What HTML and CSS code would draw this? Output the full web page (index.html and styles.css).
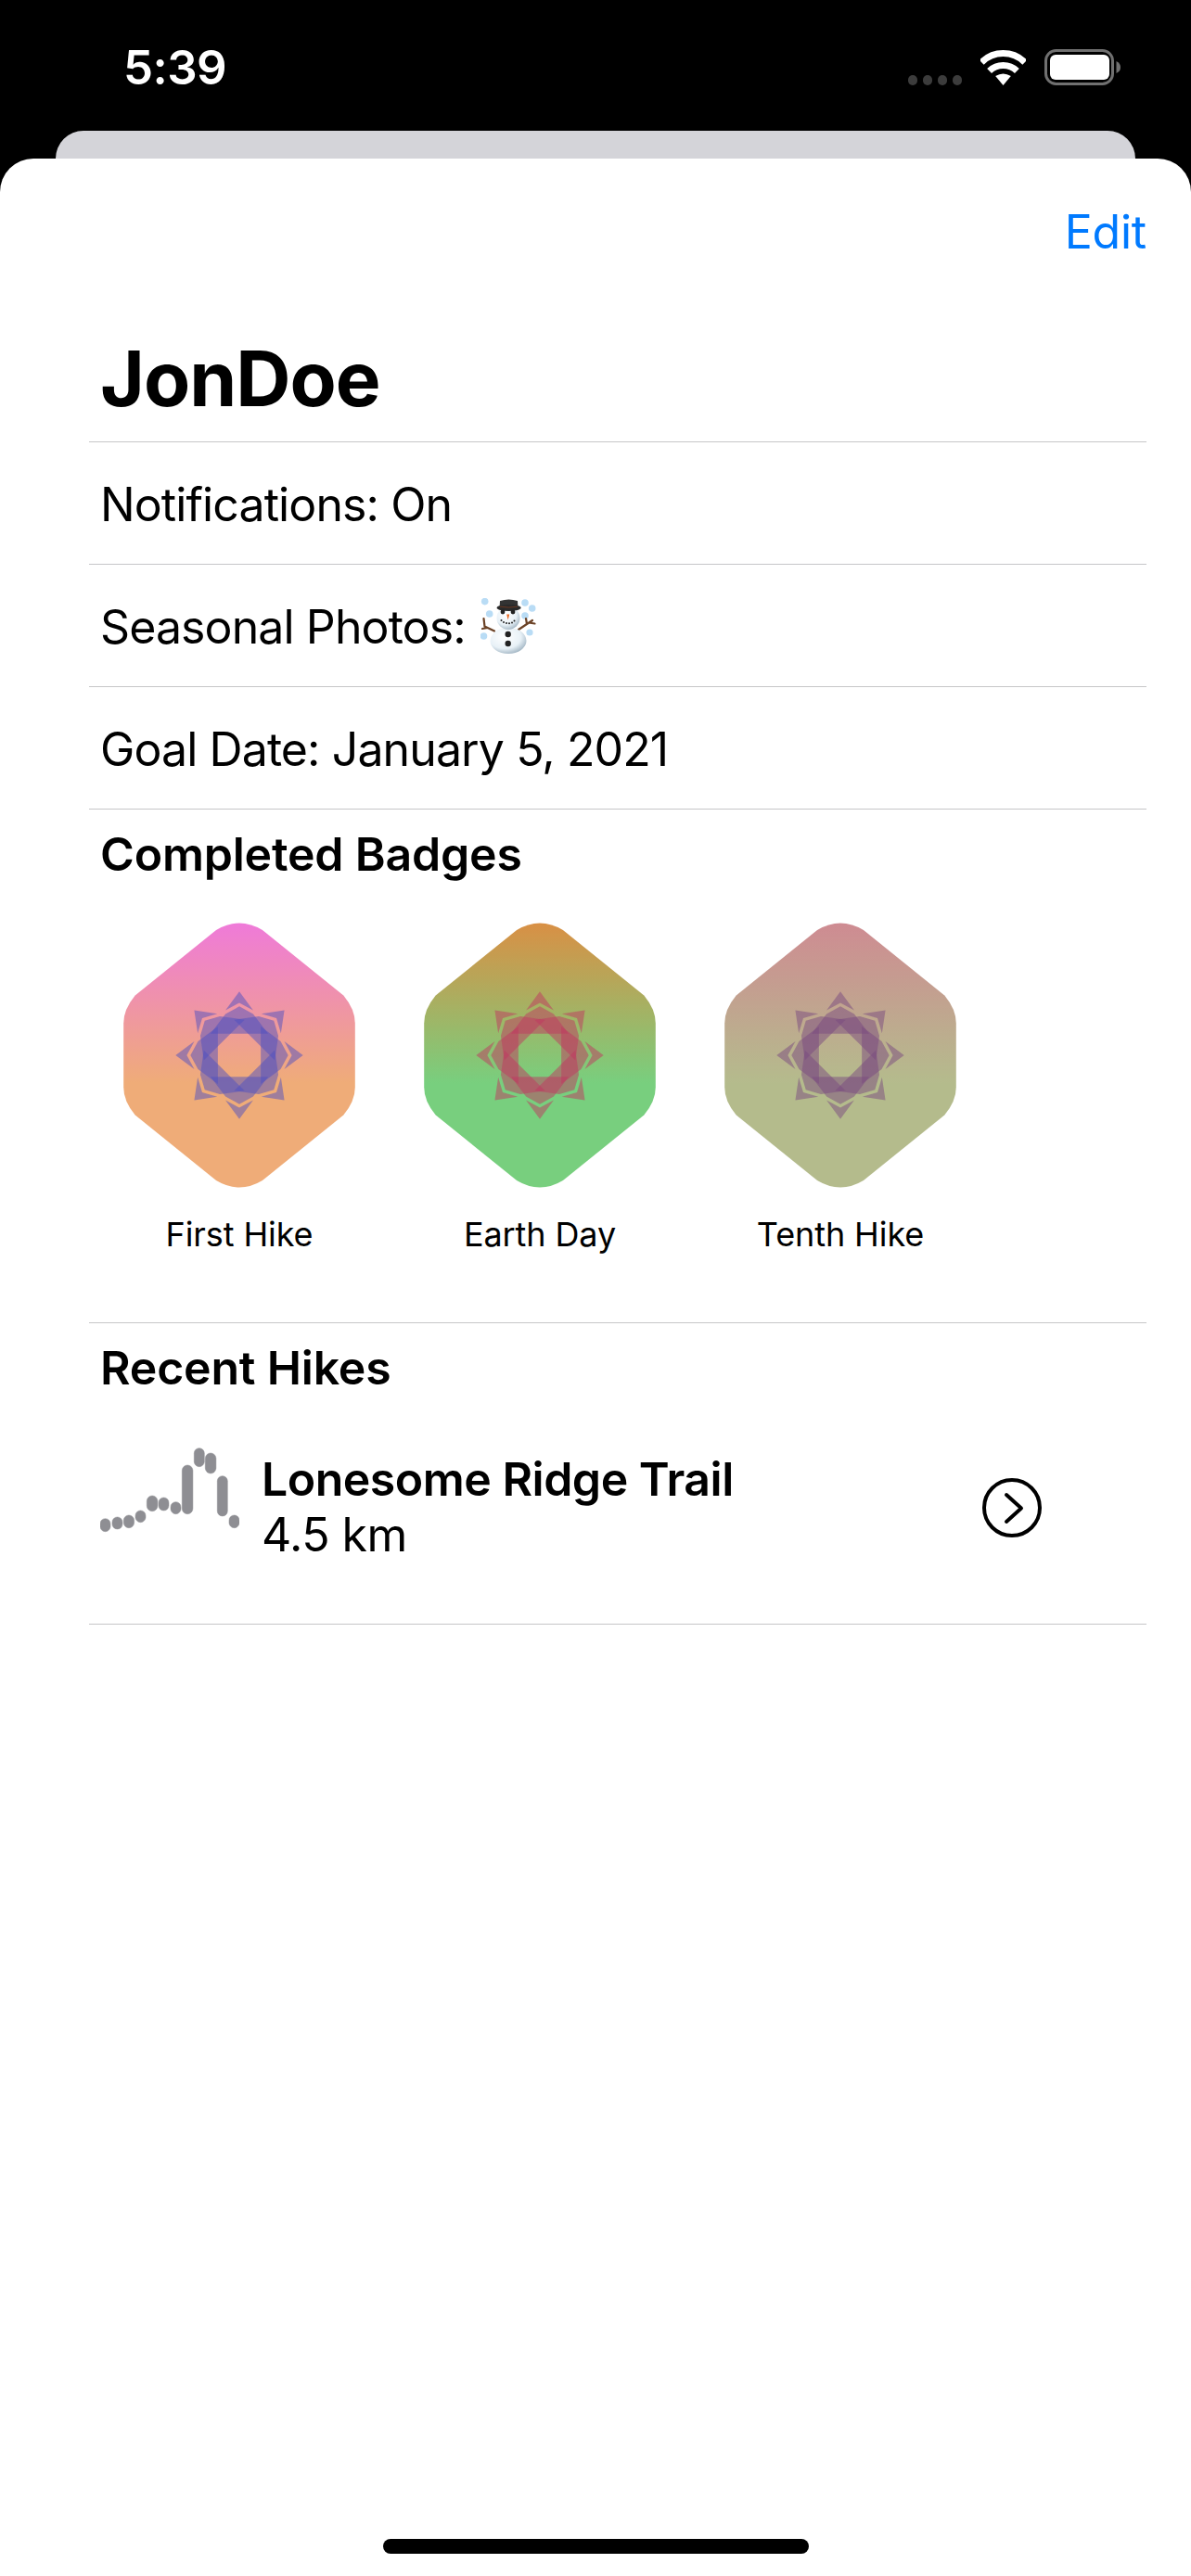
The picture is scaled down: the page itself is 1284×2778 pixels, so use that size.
FILE: index.html
```html
<!DOCTYPE html>
<html lang="en">
<head>
<meta charset="utf-8">
<title>Profile</title>
<link rel="stylesheet" href="styles.css">
</head>
<body>
<svg class="defs" width="0" height="0" aria-hidden="true">
  <defs>
    <linearGradient id="badgeGrad" gradientUnits="userSpaceOnUse" x1="150" y1="0" x2="150" y2="180">
      <stop offset="0" stop-color="#ef78dd"/>
      <stop offset="1" stop-color="#efac78"/>
    </linearGradient>
    <path id="sym" fill="#4f4fbf" fill-opacity="0.5" d="M0 -68.7L-14.92 -48.5L0 -56.62L14.92 -48.5ZM0 -52.66L-14.92 -44.54L-31.02 -23.16L31.02 -23.16L14.92 -44.54Z"/>
    <g id="badge">
      <path fill="url(#badgeGrad)" d="M262.32 85.5L174.96 15Q150 0 125.04 15L37.68 85.5Q25.2 100.5 25.2 115.5L25.2 184.5Q25.2 199.5 37.68 214.5L125.04 285Q150 300 174.96 285L262.32 214.5Q274.8 199.5 274.8 184.5L274.8 115.5Q274.8 100.5 262.32 85.5Z"/>
      <g transform="translate(150 150)">
        <use href="#sym"/>
        <use href="#sym" transform="rotate(45)"/>
        <use href="#sym" transform="rotate(90)"/>
        <use href="#sym" transform="rotate(135)"/>
        <use href="#sym" transform="rotate(180)"/>
        <use href="#sym" transform="rotate(225)"/>
        <use href="#sym" transform="rotate(270)"/>
        <use href="#sym" transform="rotate(315)"/>
      </g>
    </g>
  </defs>
</svg>
<div class="screen">
  <header class="status">
    <span class="time">5:39</span>
    <div class="status-icons">
      <div class="signal"><i></i><i></i><i></i><i></i></div>
      <svg class="wifi" width="49" height="38" viewBox="0 0 49 38">
        <path d="M1.2 13.2A33 33 0 0 1 47.8 13.2" fill="none" stroke="#fff" stroke-width="7"/>
        <path d="M9.6 22.6A21.5 21.5 0 0 1 39.4 22.6" fill="none" stroke="#fff" stroke-width="7"/>
        <path d="M24.5 38L16.2 28Q24.5 23 32.8 28Z" fill="#fff"/>
      </svg>
      <svg class="battery" width="82" height="39" viewBox="0 0 82 39">
        <rect x="1.5" y="1.5" width="72" height="36" rx="11" fill="none" stroke="#707070" stroke-width="3"/>
        <rect x="6" y="6" width="64" height="27" rx="6" fill="#fff"/>
        <path d="M77.5 13Q82 15 82 19.5Q82 24 77.5 26Z" fill="#707070"/>
      </svg>
    </div>
  </header>
  <div class="peek"></div>
  <main class="sheet">
    <div class="edit-bar"><span class="edit">Edit</span></div>
    <div class="list">
      <h1 class="title">JonDoe</h1>
      <div class="row">Notifications: On</div>
      <div class="row">
        <span>Seasonal Photos:</span>
        <svg class="snowman" width="62" height="62" viewBox="0 0 62 62" role="img" aria-label="snowman">
          <defs>
            <radialGradient id="snow" cx="0.4" cy="0.35" r="0.75">
              <stop offset="0" stop-color="#ffffff"/>
              <stop offset="0.6" stop-color="#e8f1f7"/>
              <stop offset="1" stop-color="#8fa5b5"/>
            </radialGradient>
          </defs>
          <g fill="#b9dcf5">
            <circle cx="4.7" cy="3.6" r="3.8"/><circle cx="48" cy="5" r="3.8"/><circle cx="55.7" cy="11" r="3.8"/>
            <circle cx="9.7" cy="17" r="3.8"/><circle cx="48" cy="19" r="3.8"/><circle cx="53" cy="37" r="3.6"/>
            <circle cx="3.5" cy="41" r="3.8"/>
          </g>
          <g stroke="#6b4226" stroke-width="2.2" fill="none" stroke-linecap="round">
            <path d="M15 35.5L4.5 30.5M4.5 30.5L3.5 22M8 32L2 33"/>
            <path d="M41 34L56 24M50 28L49 22M52 26.5L58.5 27.5"/>
          </g>
          <ellipse cx="30" cy="46" rx="19.5" ry="14" fill="url(#snow)"/>
          <circle cx="30" cy="21.5" r="12.5" fill="url(#snow)"/>
          <path d="M20.5 11.5L21 3Q30.5 0 40 3L40.5 11.5Z" fill="#333"/>
          <ellipse cx="30.6" cy="10.5" rx="13" ry="3.4" fill="#2a2a2a"/>
          <path d="M21 9.2Q30.5 11 40 9.2" stroke="#7a3b20" stroke-width="0.8" fill="none"/>
          <circle cx="24" cy="15" r="2.4" fill="#222"/><circle cx="35" cy="15" r="2.4" fill="#222"/>
          <path d="M28.2 17.5H31.2L29.7 23.5Z" fill="#e8651d"/>
          <g fill="#222">
            <circle cx="22.5" cy="24" r="1"/><circle cx="25" cy="26" r="1"/><circle cx="28" cy="27" r="1"/><circle cx="31" cy="27.2" r="1"/><circle cx="34" cy="26.4" r="1"/><circle cx="36.5" cy="24.5" r="1"/>
            <circle cx="29.7" cy="39" r="3.2"/><circle cx="29.7" cy="49" r="3.2"/>
          </g>
        </svg>
      </div>
      <div class="row">Goal Date: January 5, 2021</div>
      <section class="section badges-section">
        <h2 class="heading">Completed Badges</h2>
        <div class="badges">
          <figure class="badge">
            <svg class="badge-art" width="300" height="300" viewBox="0 0 300 300"><use href="#badge"/></svg>
            <figcaption class="badge-name">First Hike</figcaption>
          </figure>
          <figure class="badge">
            <svg class="badge-art earth" width="300" height="300" viewBox="0 0 300 300"><use href="#badge"/></svg>
            <figcaption class="badge-name">Earth Day</figcaption>
          </figure>
          <figure class="badge">
            <svg class="badge-art tenth" width="300" height="300" viewBox="0 0 300 300"><use href="#badge"/></svg>
            <figcaption class="badge-name">Tenth Hike</figcaption>
          </figure>
        </div>
      </section>
      <section class="section hikes-section">
        <h2 class="heading">Recent Hikes</h2>
        <div class="hike">
          <svg class="graph" width="150" height="128" viewBox="0 0 150 128" fill="#8e8e93">
            <rect x="0" y="76.7" width="11" height="14" rx="5.5"/>
            <rect x="13" y="75" width="11" height="13" rx="5.5"/>
            <rect x="25.3" y="73" width="11.3" height="13.7" rx="5.6"/>
            <rect x="38" y="68" width="11" height="12.7" rx="5.5"/>
            <rect x="50.3" y="52" width="11.6" height="16.7" rx="5.8"/>
            <rect x="63" y="54" width="11" height="14" rx="5.5"/>
            <rect x="76" y="58.7" width="11" height="13" rx="5.5"/>
            <rect x="88.3" y="19" width="11.6" height="52.7" rx="5.8"/>
            <rect x="101.3" y="0.7" width="11" height="20" rx="5.5"/>
            <rect x="113.3" y="6" width="11.6" height="22" rx="5.8"/>
            <rect x="126.3" y="30.7" width="11" height="43.3" rx="5.5"/>
            <rect x="139" y="73" width="11" height="13.7" rx="5.5"/>
          </svg>
          <div class="hike-text">
            <div class="hike-name">Lonesome Ridge Trail</div>
            <div class="hike-dist">4.5 km</div>
          </div>
          <svg class="chevron" width="64" height="64" viewBox="0 0 64 64" fill="none" stroke="#000" stroke-width="4">
            <circle cx="32" cy="32" r="30"/>
            <path d="M26 18L42 32.5L26 47" stroke-linecap="round" stroke-linejoin="round"/>
          </svg>
        </div>
      </section>
    </div>
    <div class="home-bar"></div>
  </main>
</div>
</body>
</html>
```

FILE: styles.css
```css
* { box-sizing: border-box; }
html, body { margin: 0; padding: 0; background: #000; }
.defs { position: absolute; }
.screen {
  width: 1284px;
  height: 2778px;
  display: flex;
  flex-direction: column;
  overflow: hidden;
  background: #000;
  font-family: Inter, "Liberation Sans", sans-serif;
  color: #000;
}
.status {
  height: 141px;
  padding: 4px 76px 0 133px;
  display: flex;
  align-items: center;
  justify-content: space-between;
  color: #fff;
}
.time { font-size: 51px; font-weight: 600; letter-spacing: -0.6px; }
.status-icons { display: flex; align-items: center; }
.signal { display: flex; gap: 6px; margin: 27px 20px 0 0; }
.signal i { width: 10px; height: 11px; border-radius: 5px; background: #3c3c3c; }
.wifi { margin-right: 20px; }
.peek {
  height: 30px;
  margin: 0 60px;
  background: #d4d4d9;
  border-radius: 30px 30px 0 0;
}
.sheet {
  flex: 1;
  position: relative;
  background: #fff;
  border-radius: 36px 36px 0 0;
}
.edit-bar {
  height: 158px;
  padding: 50px 48px 0 0;
  display: flex;
  justify-content: flex-end;
  align-items: flex-start;
}
.edit { font-size: 50px; line-height: 58px; color: #007aff; letter-spacing: -0.2px; }
.list { margin: 0 48px 0 96px; }
.title {
  margin: 0;
  height: 148px;
  padding: 32px 0 0 12px;
  border-bottom: 1px solid #c6c6c8;
  font-size: 82px;
  line-height: 96px;
  font-weight: 700;
  letter-spacing: -1px;
}
.row {
  height: 132px;
  padding: 3px 0 0 12px;
  display: flex;
  align-items: center;
  gap: 16px;
  border-bottom: 1px solid #c6c6c8;
  font-size: 50px;
  letter-spacing: -0.9px;
}
.section { border-bottom: 1px solid #c6c6c8; }
.badges-section { height: 554px; }
.hikes-section { height: 325px; }
.heading {
  margin: 0;
  padding: 0 0 0 12px;
  font-size: 50px;
  line-height: 96px;
  font-weight: 600;
  letter-spacing: -0.2px;
}
.badges { display: flex; gap: 24px; padding: 19px 0 0 12px; }
.badge { margin: 0; width: 300px; }
.badge-art { display: block; }
.earth { filter: hue-rotate(90deg); }
.tenth { filter: grayscale(0.5) hue-rotate(45deg); }
.badge-name {
  margin-top: 21px;
  text-align: center;
  font-size: 36px;
  line-height: 44px;
  letter-spacing: -0.1px;
}
.hike {
  height: 206px;
  padding: 0 113px 0 12px;
  display: flex;
  align-items: center;
}
.graph {
  flex: none;
  margin: 0 24px 3px 0;
  stroke: #8e8e93;
  stroke-width: 0.5;
}
.hike-text {
  flex: 1;
  padding-bottom: 3px;
  font-size: 50px;
  line-height: 60px;
  letter-spacing: -0.55px;
}
.hike-name { font-weight: 600; letter-spacing: -0.5px; }
.chevron { flex: none; }
.home-bar {
  position: absolute;
  left: 413px;
  bottom: 24px;
  width: 459px;
  height: 16px;
  border-radius: 8px;
  background: #000;
}
```
